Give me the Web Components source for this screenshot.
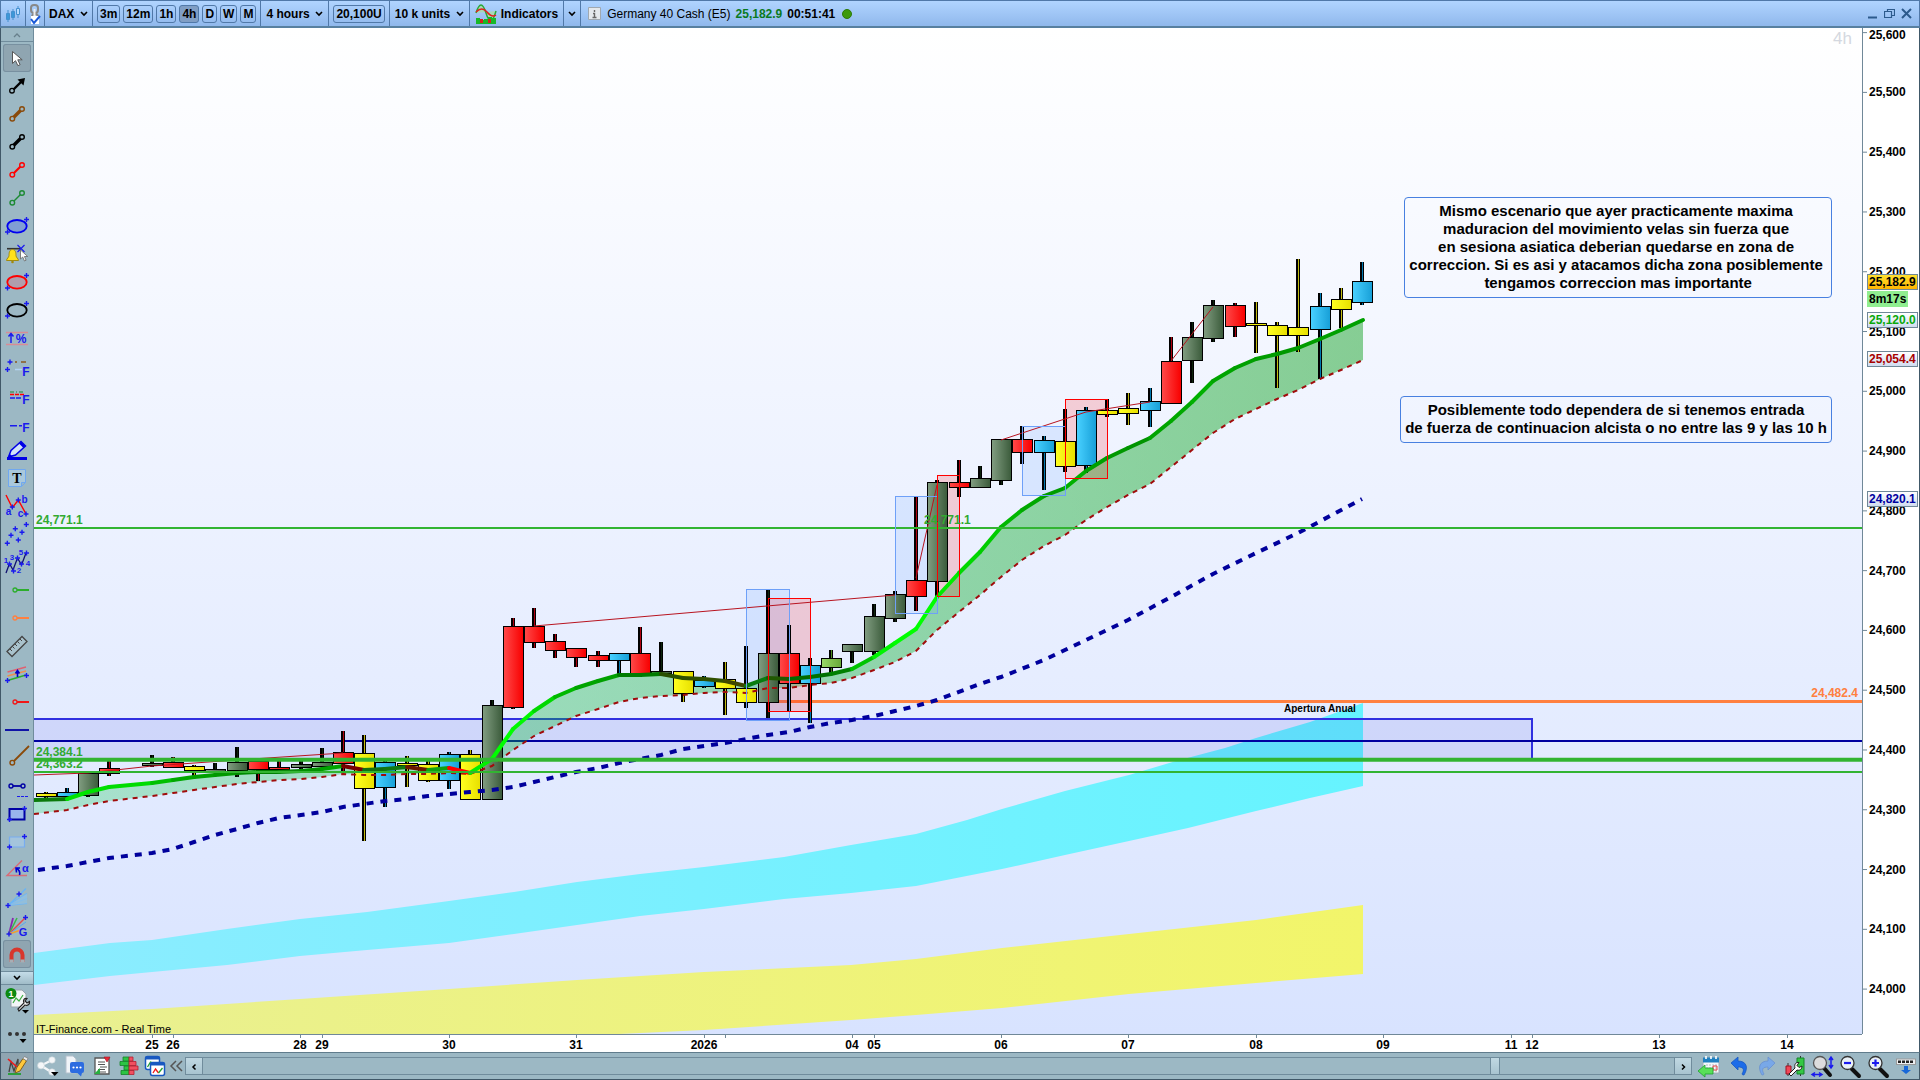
<!DOCTYPE html>
<html lang="en">
<head>
<meta charset="utf-8">
<title>DAX 4 hours</title>
<style>
  html, body {
    margin: 0;
    height: 100%;
    overflow: hidden;
    font: bold 12px "Liberation Sans", Arial, sans-serif;
    color: #000;
  }
</style>
</head>
<body>
<trading-window></trading-window>

<script>
// ---------- icons, all on a 28 x 28 grid ----------

const plus = (x, y, c = '#1a1aee') =>
    `<path d="M${x - 2.5} ${y}h5M${x} ${y - 2.5}v5" stroke="${c}" stroke-width="1.4"/>`;

const link = (color, width) => `
  <path d="M10.5 17.5 18 10" stroke="${color}" stroke-width="${width}"/>
  <g fill="#9cb8c4" stroke="${color}" stroke-width="1.4"><circle cx="9.3" cy="18.7" r="2.3"/><circle cx="19" cy="9" r="2.3"/></g>`;

const oval = (color, fill) => `
  <ellipse cx="14" cy="14.3" rx="9.7" ry="6.3" fill="${fill}" stroke="${color}" stroke-width="1.8"/>
  ${plus(23.5, 7.5)}${plus(4.5, 20)}`;

const ray = (color) => `
  <path d="M14 14h12" stroke="${color}" stroke-width="2"/>
  <circle cx="12" cy="14" r="2" fill="none" stroke="${color}" stroke-width="1.3"/>`;

const letter = (x, y, t, size = 10, color = '#1a1aee') =>
    `<text x="${x}" y="${y}" font-size="${size}" fill="${color}" text-anchor="middle">${t}</text>`;

const lens = (inner) => `
  <path d="m17 17 7 7" stroke="#111" stroke-width="4" stroke-linecap="round"/>
  <circle cx="12.5" cy="11" r="6.5" fill="#e8f0f6" stroke="#333" stroke-width="1.3"/>${inner}`;

const ICONS = {
    cursor: '<path d="M9.5 7.5v12l3-2.8 2.4 5 2.2-1-2.3-4.9h4.4z" fill="#fff" stroke="#555"/>',
    arrow: '<path d="m10.5 17.5 8-8" stroke="#000" stroke-width="2.4"/><path d="m22 6-7.5 1.5 6 6z"/><circle cx="9" cy="18.7" r="2.3" fill="none" stroke="#000" stroke-width="1.3"/>',
    linkBrown: link('#8a4a0a', 3.4),
    linkBlack: link('#000', 3.4),
    linkRed: link('#f00', 2.2),
    linkGreen: link('#1c8a34', 1.4),
    ovalBlue: oval('#0000f0', '#809ed4'),
    bell: `<path d="M4 8.7h14" stroke="#333" stroke-width="1.6"/><path d="m14.5 5 7 7M21.5 5l-7 7" stroke="#1a1aee" stroke-width="1.2"/>
      <path d="M9.5 9.5c-3 0-3.5 3-3.5 6 0 2-2.5 3-2.5 5h12c0-2-2.5-3-2.5-5 0-3-.5-6-3.5-6z" fill="#ffe21a" stroke="#a08a10"/><circle cx="9.5" cy="22" r="1.3" fill="#a08a10"/>
      <path d="M17.5 10v9l2.2-2 1.8 4 1.6-.8-1.7-3.7h3.3z" fill="#fff" stroke="#666" stroke-width=".8"/>`,
    ovalRed: oval('#f00', '#b09eac'),
    ovalBlack: oval('#000', 'none'),
    percent: '<path d="M3 8.5h22M3 20.5h22" stroke="#d88c96" stroke-width="1.6"/><path d="M8 19V10M5.5 12.5 8 9.5l2.5 3" fill="none" stroke="#1a1aee" stroke-width="1.5"/>' + letter(18, 19, '%', 12),
    fibA: plus(7, 10) + plus(4.5, 17.5) + '<path d="M12 10h2M18 10h5" stroke="#8a5a20" stroke-width="1.5"/><path d="M12 17.5h7" stroke="#b4d4f4" stroke-width="1.5"/>' + letter(23, 24, 'F', 12),
    fibB: '<path d="M7 12h15" stroke="#1c8a34" stroke-dasharray="4 2 1 2"/><path d="M7 14.5h15" stroke="#f00" stroke-width="1.5" stroke-dasharray="4 1"/><path d="M7 18h11" stroke="#1a1aee" stroke-width="1.5" stroke-dasharray="5 1"/>' + letter(23, 24, 'F', 12),
    fibC: '<path d="M7 17.7h12" stroke="#1a1aee" stroke-width="1.5" stroke-dasharray="7 2 3 1"/>' + letter(23, 24, 'F', 12),
    marker: '<path d="M4 22.5h20" stroke="#0000e6" stroke-width="3"/><path d="M5.5 21 8 14.5 18 5.5l4.5 4.5-10 9z" fill="#d4e4f8" stroke="#0000e6" stroke-width="1.5"/><path d="m16 7.5 2-2 4.5 4.5-2 2zM5 22l1.500-4.500 3 3z" fill="#0000e6"/>',
    text: '<path d="M5.5 5.5h17v13l-4 4h-13zM22.5 18.5h-4v4" fill="#a9c8dc" stroke="#70a8f0"/><text x="14" y="19" text-anchor="middle" font-family="Liberation Serif,serif" font-size="14">T</text>',
    abc: '<path d="m3 3 6.3 12.7L15.3 8 23 22" fill="none" stroke="#f00" stroke-width="1.4"/>' + plus(9.3, 15) + plus(15.3, 8) + plus(23, 22) + letter(5.5, 23, 'a', 10) + letter(21.5, 11, 'b', 10) + letter(17.5, 25, 'c', 10),
    waveA: '<path d="m4.3 23 3.7-8 7 5 4-8 4-7.5M8 15l4.3-6.3L15.3 20" fill="none" stroke="#82b4ec"/>' + plus(23.3, 4.5) + plus(12.3, 8.7) + plus(19, 12.3) + plus(8, 15.3) + plus(15.3, 20) + plus(4.3, 23.3),
    waveB: '<path d="m3 25 3.5-9.5L10 22l4.5-12 4 7 4.5-12" fill="none" stroke="#101070" stroke-width="1.3"/>' + plus(6.5, 16) + plus(10.5, 23) + plus(14.5, 10) + plus(18.5, 16) + plus(23.5, 5) + letter(3, 15, '1', 8) + letter(16, 25, '2', 8) + letter(9, 12, '3', 8) + letter(25, 18, '4', 8) + letter(18, 7, '5', 8),
    rayGreen: ray('#2cae2c'),
    rayOrange: ray('#ff8040'),
    ruler: '<path d="m4 19.5 15-15 5 5-15 15z" fill="#a9c2cc" stroke="#444" stroke-width="1.3"/><path d="m7 17 2 2m.5-4.5 2 2m.5-4.500 2 2m.5-4.500 2 2M17 7l2 2" stroke="#444"/>',
    channel: '<path d="M4.5 12 23 7" stroke="#e06070" stroke-width="1.4"/><path d="m4.500 16 18.500-5" stroke="#f0904c" stroke-width="1.4"/><path d="M4.5 20.5 23 15" stroke="#2cae2c" stroke-width="1.6"/><path d="M14.5 17v-6m-2 2.5 2-3 2 3" fill="none" stroke="#0000c8" stroke-width="1.6"/>' + plus(4.5, 20.5) + plus(23.5, 15.5),
    rayRed: ray('#f01818'),
    hline: '<path d="M2 14h24" stroke="#0000a4" stroke-width="1.8"/>',
    lineBrown: '<path d="M11 17 26 2" stroke="#8a4a0a" stroke-width="1.8"/><circle cx="9.3" cy="18.7" r="2.3" fill="none" stroke="#8a4a0a" stroke-width="1.4"/>',
    segment: '<path d="M10 14h8" stroke="#0000a4" stroke-width="1.8"/><circle cx="8" cy="14" r="2" fill="none" stroke="#0000a4" stroke-width="1.4"/><circle cx="20" cy="14" r="2" fill="none" stroke="#0000a4" stroke-width="1.4"/><path d="M14 24.5h11" stroke="#1a1aee" stroke-dasharray="3 1"/>',
    rectNavy: '<path d="M6.5 9h15v10.5h-15z" fill="#98b4ec" stroke="#0000a4" stroke-width="2"/>' + plus(21.5, 8.5) + plus(6.5, 19.5),
    rectLight: '<path d="M6.5 9h15v10h-15z" fill="#a4c4dc" stroke="#78acf0" stroke-width="1.2"/>' + plus(21.5, 8.5) + plus(6.5, 19),
    angle: '<path d="m19 4.5-15 15h20" fill="none" stroke="#d86c78" stroke-width="1.4"/><path d="M16.5 19c1-3-1-5.5-3.5-7m.5 4.500-.5-4.500 4 0" fill="none" stroke="#0000d0" stroke-width="1.6"/>' + letter(22.5, 16, 'α', 11),
    fan: '<path d="M5 21.5 23 4.5M5 21.5 24 9.5M5 21.5l19-7M5 21.5l19-2" stroke="#68b4f8" stroke-width="1.2"/><path d="m5 21.5 19-12v10z" fill="#90c0e4" opacity=".7"/>' + plus(16, 10) + plus(5, 21.5),
    gann: '<path d="m6 22 4-16" stroke="#8828b0" stroke-width="1.8"/><path d="m6 22 8-16" stroke="#38b848" stroke-width="1.5"/><path d="M6 22 22 6" stroke="#e84848" stroke-width="1.5"/><path d="m6 22 17-12" stroke="#58a8f0"/><path d="m6 22 12-4" stroke="#f0a030" stroke-width="1.5"/>' + plus(22.5, 5.5) + plus(6, 22) + letter(20, 24, 'G', 11),
    magnet: '<path d="M8.5 22v-7a5.5 5.5 0 0 1 11 0v7" fill="none" stroke="#d8362c" stroke-width="4"/><path d="M6.5 19.5h4v3h-4zM17.5 19.5h4v3h-4z" fill="#a8aeb4"/>',
    docTool: `<path d="M8 5h11l4 4v13H8z" fill="#f4f6f8" stroke="#98a4ac"/><path d="m10 18 3-5 3 3 4-6" fill="none" stroke="#3cb040" stroke-width="1.2"/>
      <path d="m15 24 6-6c-1.5-3 .5-5 3-4.5l-2 2.500 2 2 2.500-1.500c.5 3-2 4.500-4.500 3.500l-6 6z" fill="#fff" stroke="#222" stroke-width="1.2"/>
      <circle cx="8" cy="8.5" r="5.5" fill="#0c8a10"/>${letter(8, 12, '1', 9, '#fff')}<path d="M19 25h7l-3.5 3.5z"/>`,
    dots: '<g fill="#333"><circle cx="7" cy="11" r="2"/><circle cx="14" cy="11" r="2"/><circle cx="21" cy="11" r="2"/></g><path d="M16.5 16h7L20 20z"/>',
    pencil: '<path d="M5 22h13" stroke="#20a030" stroke-width="1.8"/><path d="m6 20 2-10 3 9 4-12v12" fill="none" stroke="#444" stroke-width="1.3"/><path d="m5 7 9 8" stroke="#f01818" stroke-width="1.6"/><path d="m12 21 1.500-5L20 6.500l3.500 2.300L17 19z" fill="#ffc83c" stroke="#806020"/><path d="m20 6.500 1.500-2 3.500 2-1.500 2.300z" fill="#f0f0f0" stroke="#777" stroke-width=".7"/>',
    share: '<path d="M19 7.5 7 13.5 18 20.5" fill="none" stroke="#f4f6f8" stroke-width="2.2"/><g fill="#f4f6f8" stroke="#c0ccd4" stroke-width=".6"><circle cx="18" cy="8" r="3.3"/><circle cx="7" cy="13.5" r="3.5"/><circle cx="18" cy="20" r="3.3"/></g><path d="M17 20h7.500l-3.750 4z"/>',
    chat: '<path d="M5 4h7l3 3v14H5z" fill="#f0f4f8" stroke="#b4c0cc"/><path d="M11 10h10q2 0 2 2v7q0 2-2 2l-1 3.500-3.500-3.500H11q-2 0-2-2v-7q0-2 2-2z" fill="#2c6ce0"/><g fill="#fff"><circle cx="12.500" cy="15.5" r="1.100"/><circle cx="16" cy="15.5" r="1.100"/><circle cx="19.500" cy="15.5" r="1.100"/></g>',
    report: '<path d="M7 6h14v16H7z" fill="#fff" stroke="#555" stroke-width="1.3"/><path d="M10 10h7M10 12.5h7M12 15h7M10 17.5h7M11 20h7" stroke="#555"/><path d="M16 5h6l-3 5z" fill="#e82838" stroke="#a01020" stroke-width=".6"/><path d="m6 22 6-6v6z" fill="#28b040"/>',
    blocks: '<g fill="#2cc444" stroke="#148428" stroke-width=".8"><path d="M8 5h6v4H8zM5 9.5h9v4H5zM9 14h5v4H9zM6 18.5h8v4H6z"/></g><g fill="#f05060" stroke="#b02030" stroke-width=".8"><path d="M14 5h4v4h-4zM14 9.5h7v4h-7zM14 14h9v4h-9zM14 18.5h5v4h-5z"/></g>',
    windows: '<g fill="#fff" stroke="#1858c0" stroke-width="1.5"><rect x="3.5" y="4.500" width="14" height="13" rx="2"/><path d="M3.5 6h14" stroke-width="3"/></g><path d="m5.500 15 3-5 3 1" fill="none" stroke="#20a030" stroke-width="1.3"/><g fill="#fff" stroke="#1858c0" stroke-width="1.5"><rect x="8.5" y="10.5" width="14" height="13" rx="2"/><path d="M8.5 12h14" stroke-width="3"/></g><path d="m11 21 2.500-4 3 4" fill="none" stroke="#f01818" stroke-width="1.3"/><path d="m16.500 21 4-5" stroke="#20a030" stroke-width="1.3"/>',
    collapse: '<path d="m13 9-5 5 5 5M19 9l-5 5 5 5" fill="none" stroke="#555" stroke-width="1.5"/>',
    calendar: '<path d="M8 6h16v15H8z" fill="#f6f8fa" stroke="#a0acb8"/><path d="M8 5.500h16v5H8z" fill="#2080c0"/><path d="M11 4v3M16 4v3M21 4v3" stroke="#fff" stroke-width="1.6"/><path d="M11 13h12M11 16h12M11 19h12" stroke="#b0bcc8" stroke-dasharray="2 1"/><path d="M18 14h4v4h-4z" fill="none" stroke="#e04040"/><path d="m3 19 7-6v3h8v6h-8v3z" fill="#58e058" stroke="#20a030" stroke-width=".8"/>',
    undo: '<path d="m8 11 7-6v4c8 0 11 6 6 14-1 0-2-.5-2-1 3-5 1-7-4-7v3z" fill="#1c6ce8" stroke="#1858c0" stroke-width=".8"/>',
    redo: '<path d="m24 11-7-6v4c-8 0-11 6-6 14 1 0 2-.5 2-1-3-5-1-7 4-7v3z" fill="#78a8e8" stroke="#6890d0" stroke-width=".8"/>',
    candleTool: '<path d="M21.5 4v20M9 11v13" stroke="#333"/><path d="M18 6h7v16h-7z" fill="#34c844" stroke="#148428"/><path d="M7 14h5v8H7z" fill="#f04858" stroke="#a01020"/><path d="m10 22 6-6c-1-4 1-6 4-5.500l-2 3 2 2 3-1.500c0 3-2 5-5 4l-6 6z" fill="#fff" stroke="#222"/>',
    zoomFit: '<path d="m17 16 6 7" stroke="#111" stroke-width="4" stroke-linecap="round"/><circle cx="13" cy="11" r="6.5" fill="#dcdcdc" stroke="#555" stroke-width="1.3"/><path d="M24 6v9M22 8l2-3 2 3M22 13l2 3 2-3M6 22.5h8M8 20.5l-3 2 3 2M12 20.5l3 2-3 2" fill="none" stroke="#1a1aee" stroke-width="1.5"/>',
    zoomOut: lens('<path d="M9 11h7" stroke="#1a1aee" stroke-width="2.2"/>'),
    zoomIn: lens('<path d="M9 11h7M12.5 7.5v7" stroke="#1a1aee" stroke-width="2.2"/>'),
    keys: '<rect x="5.5" y="7" width="19" height="5.5" fill="#eef0f2" stroke="#999"/><path d="M7 9.700h16" stroke="#222" stroke-width="2.500" stroke-dasharray="3 1"/><path d="M13 14h4v4h3l-5 4-5-4h3z" fill="#1868d8"/>'
};

// ---------- small parts ----------

class ToolButton extends HTMLElement {
    connectedCallback() {
        const name = this.getAttribute('icon');
        this.attachShadow({ mode: 'open' }).innerHTML = `
          <style>
            :host { display: block; width: 28px; height: 28px; }
            button {
              display: block;
              box-sizing: border-box;
              width: 100%;
              height: 100%;
              padding: 0;
              border: 0;
              background: none;
              font: inherit;
            }
            svg { display: block; width: 28px; height: 28px; overflow: visible; }
            :host([active]) button { background: #8fa5b1; box-shadow: inset 0 0 0 1px #7890a0; border-radius: 3px; }
          </style>
          <button type="button" aria-label="${name}"><svg viewBox="0 0 28 28">${ICONS[name]}</svg></button>`;
    }
}
customElements.define('tool-button', ToolButton);

class PickList extends HTMLElement {
    connectedCallback() {
        this.attachShadow({ mode: 'open' }).innerHTML = `
          <style>
            :host { display: flex; align-items: center; }
            label { display: flex; align-items: center; gap: 5px; }
            select {
              appearance: none;
              border: 0;
              padding: 0;
              margin: 0;
              background: none;
              font: inherit;
              color: inherit;
            }
            svg { display: block; width: 8px; height: 6px; }
          </style>
          <label>
            <select aria-label="${this.getAttribute('label')}"><option>${this.getAttribute('value')}</option></select>
            <svg viewBox="0 0 8 6"><path d="m1 1 3 3 3-3" fill="none" stroke="#000" stroke-width="1.6"/></svg>
          </label>`;
    }
}
customElements.define('pick-list', PickList);

class TimeButton extends HTMLElement {
    connectedCallback() {
        this.attachShadow({ mode: 'open' }).innerHTML = `
          <style>
            :host { display: block; }
            button {
              display: block;
              height: 18px;
              padding: 0 2px;
              border: 1px solid #5078a8;
              border-radius: 3px;
              background: none;
              font: inherit;
              line-height: 16px;
              color: #000;
            }
            :host([active]) button { background: #809ec4; }
          </style>
          <button type="button"><slot></slot></button>`;
    }
}
customElements.define('time-button', TimeButton);

// ---------- top bar ----------

class TitleBar extends HTMLElement {
    connectedCallback() {
        this.attachShadow({ mode: 'open' }).innerHTML = `
          <style>
            :host {
              display: flex;
              box-sizing: border-box;
              height: 28px;
              border: 1px solid #5078a8;
              border-bottom: 2px solid #5880a0;
              background: linear-gradient(#b0d4ff, #90b8ec);
            }
            .cell {
              display: flex;
              align-items: center;
              gap: 3px;
              padding: 0 4px;
              border-right: 1px solid #5078a8;
            }
            .tight { padding: 0 2px; }
            .wide { padding: 0 5px; }
            .info { gap: 5px; border: 0; padding: 0 7px; font-weight: normal; }
            .info b.up { color: #0a7a1e; }
            .dot { width: 8px; height: 8px; border-radius: 50%; background: #3c9a0c; border: 1px solid #2c7a08; margin-left: 2px; }
            svg { display: block; }
            button { border: 0; padding: 0; background: none; font: inherit; display: flex; align-items: center; gap: 4px; color: #000; }
            .controls { display: flex; align-items: center; gap: 6px; margin-left: auto; padding-right: 7px; }
          </style>
          <div class="cell">
            <svg width="16" height="18"><g stroke="#4490d0" fill="#3c98d8"><path d="M3 5v12M8 4v11"/><path d="M1.5 8.5h3v6h-3zM6.5 6.5h3v6h-3z"/><path d="M13 1v12"/><path d="M11.5 3.5h3v6h-3z" fill="#b8dcff"/></g></svg>
          </div>
          <div class="cell tight">
            <svg width="14" height="22"><g fill="none" stroke="#888" stroke-width="2"><rect x="3" y="2" width="7" height="8" rx="3"/><rect x="4" y="11" width="6" height="7" rx="3"/></g><path d="M6.5 6v8" stroke="#eee" stroke-width="2"/><path d="M3 13h8v8H3z" fill="#fff"/><path d="m3 16 3 4 6-7" fill="none" stroke="#1858d8" stroke-width="2"/></svg>
          </div>
          <div class="cell"><pick-list label="Instrument" value="DAX"></pick-list></div>
          <div class="cell">
            <time-button>3m</time-button>
            <time-button>12m</time-button>
            <time-button>1h</time-button>
            <time-button active>4h</time-button>
            <time-button>D</time-button>
            <time-button>W</time-button>
            <time-button>M</time-button>
          </div>
          <div class="cell wide"><pick-list label="Timeframe" value="4 hours"></pick-list></div>
          <div class="cell"><time-button>20,100U</time-button></div>
          <div class="cell wide"><pick-list label="History" value="10 k units"></pick-list></div>
          <div class="cell wide">
            <button type="button">
              <svg width="22" height="22"><path d="M1 10q5-16 10 0t10-2" fill="#a8d8b8" stroke="#28a838" stroke-width="1.5"/><path d="M1 9q6-6 11 0t9 3" fill="none" stroke="#e02020" stroke-width="1.5"/><path d="M1 21v-6h4v2h4v-1h4v-2h4v1h4v6z" fill="#18b828"/><path d="M5 16h3v4H5zM13 16h3v4h-3z" fill="#d82020"/></svg>
              Indicators
            </button>
          </div>
          <div class="cell">
            <button type="button" aria-label="More indicators"><svg width="8" height="6"><path d="m1 1 3 3 3-3" fill="none" stroke="#000" stroke-width="1.6"/></svg></button>
          </div>
          <div class="cell info">
            <svg width="14" height="14"><path d="M.5.5h12v12H.5z" fill="#e4e8ec" stroke="#a0a8b0"/><path d="M6.5 3v2M5 6.5h1.5v4M4.5 10.5h4" fill="none" stroke="#666" stroke-width="1.4"/></svg>
            <span>Germany 40 Cash (E5)</span><b class="up">25,182.9</b><b>00:51:41</b><i class="dot"></i>
          </div>
          <div class="controls">
            <button type="button" aria-label="Minimise"><svg width="11" height="11"><path d="M1 9.5h9" stroke="#2c5a8c" stroke-width="2"/></svg></button>
            <button type="button" aria-label="Restore"><svg width="11" height="11"><path d="M3.5 3V1.5h7v6H8M.5 3.5h7v6h-7z" fill="none" stroke="#2c5a8c" stroke-width="1.2"/></svg></button>
            <button type="button" aria-label="Close"><svg width="11" height="11"><path d="m1 1 9 9m0-9-9 9" stroke="#2c5a8c" stroke-width="2"/></svg></button>
          </div>`;
    }
}
customElements.define('title-bar', TitleBar);

// ---------- drawing tools ----------

class DrawTools extends HTMLElement {
    connectedCallback() {
        const names = ['cursor', 'arrow', 'linkBrown', 'linkBlack', 'linkRed', 'linkGreen', 'ovalBlue', 'bell',
            'ovalRed', 'ovalBlack', 'percent', 'fibA', 'fibB', 'fibC', 'marker', 'text', 'abc', 'waveA', 'waveB',
            'rayGreen', 'rayOrange', 'ruler', 'channel', 'rayRed', 'hline', 'lineBrown', 'segment', 'rectNavy',
            'rectLight', 'angle', 'fan', 'gann', 'magnet'];
        const active = ['cursor', 'magnet'];
        this.attachShadow({ mode: 'open' }).innerHTML = `
          <style>
            :host {
              display: flex;
              flex-direction: column;
              align-items: center;
              box-sizing: border-box;
              width: 34px;
              border-left: 1px solid #405868;
              border-right: 1px solid #708c9c;
              background: #9cb8c4;
              overflow: hidden;
            }
            .fold {
              flex: none;
              display: flex;
              align-items: center;
              justify-content: center;
              width: 100%;
              height: 14px;
              padding: 0;
              border: 0;
              border-bottom: 1px solid #708c9c;
              background: none;
            }
            .down { border-top: 1px solid #708c9c; background: linear-gradient(#c4dce8, #a0bcc8); }
            .list { padding: 2px 0 3px; }
            .more { display: flex; flex-direction: column; gap: 10px; }
          </style>
          <button class="fold" type="button" aria-label="Scroll up"><svg width="8" height="6"><path d="m1 5 3-3 3 3" fill="none" stroke="#68808c" stroke-width="1.3"/></svg></button>
          <div class="list">${names.map(n => `<tool-button icon="${n}" ${active.includes(n) ? 'active' : ''}></tool-button>`).join('')}</div>
          <button class="fold down" type="button" aria-label="Scroll down"><svg width="8" height="6"><path d="m1 1 3 3 3-3" fill="none" stroke="#000" stroke-width="1.6"/></svg></button>
          <div class="more"><tool-button icon="docTool"></tool-button><tool-button icon="dots"></tool-button></div>`;
    }
}
customElements.define('draw-tools', DrawTools);

// ---------- chart ----------

// drawing space of the plot
const LEFT = 34, TOP = 28, WIDTH = 1828, HEIGHT = 1006;

const priceY = p => 391.3 + (25000 - p) * 0.5978;
const pctY = p => ((priceY(p) - TOP) / HEIGHT * 100).toFixed(3) + '%';
const pctX = x => ((x - LEFT) / WIDTH * 100).toFixed(3) + '%';

// x, high, body top, body bottom, low, colour
const CANDLES = [
    [46, 792, 793, 797, 798, 'y'], [67, 788, 792, 797, 797, 'b'], [88, 773, 773, 796, 797, 'd'],
    [109, 761, 768, 774, 776, 'r'], [152, 755, 763, 766, 767, 'd'], [173, 757, 762, 768, 768, 'r'],
    [194, 765, 766, 771, 776, 'y'], [215, 763, 769, 771, 773, 'd'], [237, 747, 762, 771, 777, 'd'],
    [258, 761, 761, 770, 781, 'r'], [279, 761, 767, 770, 771, 'r'], [301, 761, 764, 768, 769, 'd'],
    [322, 748, 762, 767, 767, 'd'], [343, 731, 752, 764, 772, 'r'], [364, 735, 753, 789, 841, 'y'],
    [385, 761, 762, 788, 807, 'b'], [407, 756, 763, 766, 787, 'y'], [428, 761, 764, 781, 782, 'y'],
    [449, 752, 754, 781, 789, 'b'], [470, 750, 754, 800, 800, 'y'], [492, 700, 705, 800, 800, 'd'],
    [513, 618, 626, 708, 709, 'r'], [534, 608, 626, 643, 648, 'r'], [555, 634, 641, 651, 658, 'r'],
    [576, 648, 648, 658, 667, 'r'], [598, 651, 655, 661, 667, 'r'], [619, 653, 653, 661, 676, 'b'],
    [640, 627, 653, 675, 677, 'r'], [661, 642, 671, 674, 674, 'd'], [683, 671, 671, 694, 702, 'y'],
    [704, 676, 680, 687, 688, 'b'], [725, 662, 679, 689, 715, 'y'], [746, 646, 688, 703, 708, 'y', 'd'],
    [768, 590, 653, 703, 718, 'd'], [789, 625, 653, 684, 711, 'r', 'd'], [810, 658, 665, 684, 723, 'b'],
    [831, 650, 658, 668, 675, 'g'], [852, 644, 644, 652, 663, 'd'], [874, 604, 616, 652, 655, 'd'],
    [895, 591, 594, 619, 622, 'd'], [916, 497, 580, 597, 611, 'r'], [937, 480, 482, 582, 596, 'd'],
    [959, 460, 482, 488, 497, 'r'], [980, 466, 478, 488, 488, 'd'], [1001, 439, 439, 481, 485, 'd'],
    [1022, 426, 439, 453, 464, 'r'], [1044, 436, 440, 453, 490, 'b'], [1065, 409, 441, 467, 472, 'y', 'd'],
    [1086, 407, 410, 466, 473, 'b'], [1107, 399, 410, 415, 417, 'y'], [1128, 393, 408, 414, 425, 'y'],
    [1150, 388, 401, 411, 427, 'b'], [1171, 337, 361, 404, 404, 'r'], [1192, 322, 337, 361, 383, 'd'],
    [1213, 300, 305, 339, 342, 'd'], [1235, 303, 305, 327, 337, 'r'], [1256, 302, 323, 326, 353, 'y'],
    [1277, 322, 325, 336, 388, 'y'], [1298, 259, 327, 336, 352, 'y'], [1320, 293, 306, 330, 379, 'b'],
    [1341, 288, 299, 310, 328, 'y'], [1362, 262, 281, 303, 305, 'b']
];

const COLORS = {
    r: ['#ff4848', '#f80000', '#b00010'],
    y: ['#ffff20', '#e8e000', '#c4bc10'],
    b: ['#48d0ff', '#18a0d8', '#0078b0'],
    d: ['#809c80', '#3c5c3c', '#0c240c'],
    g: ['#98d868', '#68a838', '#4c8c20']
};

// x, fast average, lower average, colour of the segment that ends here
const AVERAGES = [
    [34, 800, 814, ''], [67, 799, 810, '#0a7a0a'], [88, 792, 805, '#00e400'], [109, 787, 801, '#00e000'],
    [152, 783, 796, '#00dc00'], [173, 780, 793, '#00c000'], [194, 777, 790, '#00a800'], [215, 775, 787, '#00a000'],
    [237, 773, 784, '#009800'], [258, 772, 782, '#008c00'], [279, 772, 780, '#008000'], [301, 771, 779, '#0a8a0a'],
    [322, 769, 777, '#009000'], [343, 766, 774, '#00a400'], [364, 770, 775, '#780000'], [385, 769, 775, '#107010'],
    [407, 767, 774, '#107810'], [428, 770, 774, '#6a1800'], [449, 768, 773, '#10a010'], [470, 773, 774, '#ff0000'],
    [492, 759, 766, '#00f000'], [513, 729, 750, '#00ff00'], [534, 711, 736, '#00f800'], [555, 697, 726, '#00d800'],
    [576, 688, 716, '#00b800'], [598, 681, 709, '#00a400'], [619, 675, 702, '#00a000'], [640, 675, 698, '#007c00'],
    [661, 674, 696, '#007c00'], [683, 678, 695, '#285000'], [704, 679, 693, '#305000'], [725, 681, 692, '#305000'],
    [746, 686, 693, '#404800'], [768, 678, 688, '#087c10'], [789, 679, 688, '#205800'], [810, 677, 685, '#006c00'],
    [831, 674, 683, '#007000'], [852, 669, 678, '#008000'], [874, 657, 670, '#00c400'], [895, 643, 662, '#00f400'],
    [916, 629, 651, '#00ff00'], [937, 597, 630, '#00ff00'], [959, 573, 612, '#00ec00'], [980, 552, 595, '#00d800'],
    [1001, 527, 577, '#00cc00'], [1022, 510, 560, '#00b800'], [1044, 496, 546, '#00a800'], [1065, 488, 535, '#009c00'],
    [1086, 471, 520, '#00b000'], [1107, 458, 507, '#00a000'], [1128, 448, 495, '#009800'], [1150, 438, 484, '#009400'],
    [1171, 421, 467, '#00a400'], [1192, 402, 450, '#00a800'], [1213, 381, 433, '#00b000'], [1235, 368, 419, '#00a400'],
    [1256, 359, 409, '#00a000'], [1277, 354, 399, '#009c00'], [1298, 348, 390, '#009800'], [1320, 339, 379, '#009c00'],
    [1341, 330, 370, '#00a000'], [1363, 320, 360, '#00a000']
];

const SLOW = '38,870 67,866 88,862 109,858 152,853 173,849 194,842 215,835 237,829 258,823 279,818 301,815 322,812 343,807 364,804 385,801 407,799 428,796 449,794 470,792 492,790 513,787 534,782 555,777 576,772 598,768 619,763 640,759 661,755 683,749 704,746 725,743 746,739 768,735 789,732 810,727 831,723 852,720 874,716 895,711 916,706 937,700 980,684 1001,677 1044,660 1086,640 1128,620 1171,597 1213,574 1256,553 1298,533 1362,499';
const CYAN = '34,953 110,943 152,940 227,929 300,919 367,912 449,901 514,892 577,882 640,874 704,867 784,857 851,845 916,834 967,820 1002,809 1065,791 1129,775 1176,761 1225,748 1256,738 1310,722 1363,703 1363,786 1310,798 1256,811 1188,828 1129,841 1065,855 1002,869 916,886 851,893 784,899 704,909 640,916 577,925 514,934 449,943 367,950 300,956 227,965 152,972 110,976 34,985';
const YELLOW = '34,1015 152,1009 300,999 449,989 577,980 704,972 851,965 916,959 1002,948 1129,934 1256,920 1363,905 1363,974 1256,983 1129,994 1002,1008 916,1015 851,1020 704,1030 577,1036 34,1070';

const ZONES = [
    [746, 589, 43, 131, 'blue'], [768, 598, 42, 113, 'red'],
    [895, 496, 42, 117, 'blue'], [937, 475, 22, 121, 'red'],
    [1022, 426, 43, 69, 'blue'], [1065, 399, 42, 79, 'red']
];

const DAYS = [[152, '25'], [173, '26'], [300, '28'], [322, '29'], [449, '30'], [576, '31'], [704, '2026'], [725, ''],
    [852, '04'], [874, '05'], [1001, '06'], [1128, '07'], [1256, '08'], [1383, '09'], [1511, '11'], [1532, '12'],
    [1659, '13'], [1787, '14']];

class PricePlot extends HTMLElement {
    connectedCallback() {
        this.attachShadow({ mode: 'open' }).innerHTML = `
          <style>
            :host {
              display: block;
              position: relative;
              min-width: 0;
              min-height: 0;
              overflow: hidden;
              background: linear-gradient(#fff, #d8e3ff);
            }
            svg { display: block; width: 100%; height: 100%; position: absolute; }
            .unit, .source { position: absolute; font-weight: normal; }
            .unit { top: 2px; right: 10px; font-size: 17px; line-height: 18px; color: #d4d8e0; }
            .source { left: 2px; bottom: -1px; font-size: 11px; line-height: 12px; }
          </style>
          <svg viewBox="${LEFT} ${TOP} ${WIDTH} ${HEIGHT}" preserveAspectRatio="none">
            <defs>
              ${Object.entries(COLORS).map(([k, c]) => `<linearGradient id="${k}"><stop stop-color="${c[0]}"/><stop offset="1" stop-color="${c[1]}"/></linearGradient>`).join('')}
              <linearGradient id="cy"><stop stop-color="#8cecff"/><stop offset="1" stop-color="#66f4ff"/></linearGradient>
              <linearGradient id="ye"><stop stop-color="#e9f092"/><stop offset="1" stop-color="#f2f56a"/></linearGradient>
              <linearGradient id="ar"><stop stop-color="#00c83c" stop-opacity=".25"/><stop offset="1" stop-color="#10a020" stop-opacity=".48"/></linearGradient>
            </defs>
            <polygon points="${YELLOW}" fill="url(#ye)"/>
            <polygon points="${CYAN}" fill="url(#cy)"/>
            <path d="M34 719h1498v41H34z" fill="#2020d0" opacity=".1"/>
            <path d="M34 719h1498v41" fill="none" stroke="#3030e0" stroke-width="2"/>
            <path d="M34 741h1828" stroke="#0000a0" stroke-width="2"/>
            <path d="M768 701.5h1094" stroke="#ff8040" stroke-width="3"/>
            ${this.area()}
            ${this.zones(c => `fill="${c === 'red' ? '#ff0000' : '#64a0ff'}" fill-opacity=".16"`)}
            ${CANDLES.map(c => this.candle(c)).join('')}
            <path d="M34 775 88 773 152 766 237 760 343 753M534 626 895 595M916 578l21-93M1001 440l85-28 64-10M1171 361l42-54" fill="none" stroke="#b81420"/>
            ${this.averages()}
            <polyline points="${SLOW}" fill="none" stroke="#00009c" stroke-width="4" stroke-dasharray="7 7"/>
            <path d="M34 528h1828M34 772h1828" stroke="#32b432" stroke-width="2"/>
            ${this.zones(c => `fill="none" stroke="${c === 'red' ? '#f00' : '#6ea0f8'}"`)}
          </svg>
          <svg font-size="12">
            <g fill="#32aa32">
              <text x="2" y="${pctY(24778)}">24,771.1</text>
              <text x="${pctX(924)}" y="${pctY(24778)}">24,771.1</text>
              <text x="2" y="${pctY(24390)}">24,384.1</text>
              <text x="2" y="${pctY(24370)}">24,363.2</text>
            </g>
            <line x2="100%" y1="${pctY(24383.5)}" y2="${pctY(24383.5)}" stroke="#32b432" stroke-width="4"/>
            <text x="${pctX(1858)}" y="${pctY(24489)}" fill="#ff8040" text-anchor="end">24,482.4</text>
            <text x="${pctX(1284)}" y="${pctY(24463)}" font-size="10">Apertura Anual</text>
          </svg>
          <span class="unit">4h</span>
          <span class="source">IT-Finance.com - Real Time</span>
          <slot></slot>`;
    }

    zones(paint) {
        return ZONES.map(([x, y, w, h, c]) =>
            `<rect x="${x + 0.5}" y="${y + 0.5}" width="${w}" height="${h}" ${paint(c)}/>`).join('');
    }

    candle([x, high, top, bottom, low, color, wick]) {
        const w = COLORS[wick || color][2];
        return `<rect x="${x - 2}" y="${high}" width="4" height="${low - high}"/>
          <rect x="${x}" y="${high}" width="1" height="${low - high}" fill="${w}"/>
          <rect x="${x - 10}" y="${top}" width="21" height="${bottom - top}"/>
          <rect x="${x - 9}" y="${top + 1}" width="19" height="${Math.max(bottom - top - 2, 1)}" fill="url(#${color})"/>`;
    }

    area() {
        const upper = AVERAGES.map(a => a[0] + ',' + a[1]);
        const lower = AVERAGES.map(a => a[0] + ',' + a[2]).reverse();
        return `<polygon points="${upper.concat(lower).join(' ')}" fill="url(#ar)"/>`;
    }

    averages() {
        const lines = AVERAGES.slice(1).map((a, i) => {
            const p = AVERAGES[i];
            return `<line x1="${p[0]}" y1="${p[1]}" x2="${a[0]}" y2="${a[1]}" stroke="${a[3]}" stroke-width="4" stroke-linecap="round"/>`;
        });
        const low = AVERAGES.map(a => a[0] + ',' + a[2]).join(' ');
        return `<polyline points="${low}" fill="none" stroke="#a00c0c" stroke-width="2" stroke-dasharray="5 5"/>${lines.join('')}`;
    }
}
customElements.define('price-plot', PricePlot);

class ChartNote extends HTMLElement {
    connectedCallback() {
        this.attachShadow({ mode: 'open' }).innerHTML = `
          <style>
            :host {
              display: block;
              position: absolute;
              right: 30px;
              box-sizing: border-box;
              padding: 4px 4px 5px;
              border: 1px solid #4880e0;
              border-radius: 4px;
              font-size: 15px;
              line-height: 18px;
              text-align: center;
            }
            div { white-space: pre; }
          </style>
          <div><slot></slot></div>`;
    }
}
customElements.define('chart-note', ChartNote);

class PriceAxis extends HTMLElement {
    connectedCallback() {
        const steps = Array.from({ length: 17 }, (_, i) => 25600 - i * 100);
        this.attachShadow({ mode: 'open' }).innerHTML = `
          <style>
            :host { display: block; position: relative; border-left: 1px solid #708898; background: #fff; }
            svg { display: block; position: absolute; width: 100%; height: 100%; overflow: visible; }
          </style>
          <svg font-size="12">
            ${steps.map((p, i) => `<line x2="4" y1="${pctY(p)}" y2="${pctY(p)}" stroke="#708898"/><text x="6" y="${pctY(p)}" dy="${i ? 4 : 6}">${p.toLocaleString('en-US')}</text>`).join('')}
          </svg>
          <slot></slot>`;
    }
}
customElements.define('price-axis', PriceAxis);

class PriceTag extends HTMLElement {
    connectedCallback() {
        this.style.top = pctY(Number(this.getAttribute('price')));
        this.attachShadow({ mode: 'open' }).innerHTML = `
          <style>
            :host {
              display: block;
              position: absolute;
              left: 4px;
              box-sizing: border-box;
              height: 16px;
              margin-top: -8px;
              padding: 0 1px;
              border: 1px solid #708898;
              background: linear-gradient(#fff, #d0dcf0);
              line-height: 14px;
              white-space: nowrap;
            }
            :host([kind="last"]) { background: linear-gradient(#ffe030, #ffb400); }
            :host([kind="timer"]) { background: #90ee90; border-color: #90ee90; }
          </style>
          <slot></slot>`;
    }
}
customElements.define('price-tag', PriceTag);

class TimeAxis extends HTMLElement {
    connectedCallback() {
        this.attachShadow({ mode: 'open' }).innerHTML = `
          <style>
            :host { display: block; height: 18px; border-right: 1px solid #405868; background: #fff; }
            svg { display: block; width: calc(100% - 57px); height: 18px; overflow: visible; }
          </style>
          <svg font-size="12">
            <line x2="100%" y1=".5" y2=".5" stroke="#708898"/>
            ${DAYS.map(([x, t]) => `<line x1="${pctX(x + 0.5)}" x2="${pctX(x + 0.5)}" y1="0" y2="4" stroke="#708898"/><text x="${pctX(x)}" y="15" text-anchor="middle">${t}</text>`).join('')}
          </svg>`;
    }
}
customElements.define('time-axis', TimeAxis);

// ---------- bottom bar ----------

class BottomBar extends HTMLElement {
    connectedCallback() {
        const tools = names => names.map(n => `<tool-button icon="${n}"></tool-button>`).join('');
        this.attachShadow({ mode: 'open' }).innerHTML = `
          <style>
            :host {
              display: flex;
              align-items: center;
              box-sizing: border-box;
              height: 28px;
              border: 1px solid #405868;
              border-top-color: #607c8c;
              background: #9cb8c4;
              overflow: hidden;
            }
            .draw { display: flex; flex: none; justify-content: center; width: 32px; border-right: 1px solid #708c9c; background: #8fa5b1; }
            .group { display: flex; flex: none; }
            .left tool-button { width: 27px; }
            .left tool-button:last-child { width: 18px; margin-left: -6px; }
            .scroll { flex: 1; display: flex; height: 18px; box-sizing: border-box; border: 1px solid #708c9c; margin: 0 3px 0 4px; }
            .scroll button { width: 17px; padding: 0; border: 0; background: linear-gradient(#c0d8e2, #a8c4d0); }
            .scroll button:first-child { border-right: 1px solid #708c9c; }
            .scroll button:last-child { border-left: 1px solid #708c9c; }
            input { flex: 1; min-width: 0; margin: 0; appearance: none; background: none; }
            input::-webkit-slider-thumb {
              appearance: none;
              width: 10px;
              height: 16px;
              border: 1px solid #708c9c;
              border-width: 0 1px;
              background: linear-gradient(#c0d8e2, #a8c4d0);
            }
          </style>
          <div class="draw"><tool-button icon="pencil"></tool-button></div>
          <div class="group left">${tools(['share', 'chat', 'report', 'blocks', 'windows', 'collapse'])}</div>
          <div class="scroll">
            <button type="button" aria-label="Back"><svg width="8" height="8"><path d="M5.5 1.5 3 4l2.5 2.5" fill="none" stroke="#000" stroke-width="1.5"/></svg></button>
            <input type="range" aria-label="Position in history" min="0" max="1000" value="881">
            <button type="button" aria-label="Forward"><svg width="8" height="8"><path d="M3 1.5 5.5 4 3 6.5" fill="none" stroke="#000" stroke-width="1.5"/></svg></button>
          </div>
          <div class="group">${tools(['calendar', 'undo', 'redo', 'candleTool', 'zoomFit', 'zoomOut', 'zoomIn', 'keys'])}</div>`;
    }
}
customElements.define('bottom-bar', BottomBar);

// ---------- window ----------

class TradingWindow extends HTMLElement {
    connectedCallback() {
        // the notes keep their own line breaks and trailing spaces
        const first = [
            'Mismo escenario que ayer practicamente maxima ',
            'maduracion del movimiento velas sin fuerza que ',
            'en sesiona asiatica deberian quedarse en zona de ',
            'correccion. Si es asi y atacamos dicha zona posiblemente ',
            'tengamos correccion mas importante'
        ].join('\n');
        const second = [
            'Posiblemente todo dependera de si tenemos entrada',
            'de fuerza de continuacion alcista o no entre las 9 y las 10 h'
        ].join('\n');
        this.attachShadow({ mode: 'open' }).innerHTML = `
          <style>
            :host { display: grid; grid-template-rows: auto 1fr auto; height: 100vh; }
            main { display: grid; grid-template-columns: auto 1fr; min-height: 0; }
            .chart { display: grid; grid-template-columns: 1fr 58px; grid-template-rows: 1fr auto; min-width: 0; min-height: 0; }
            time-axis { grid-column: 1 / 3; }
            price-axis { border-right: 1px solid #405868; }
            .first { top: 169px; }
            .second { top: 368px; }
            .ema { color: #0aa80a; }
            .low { color: #a80000; }
            .slow { color: #0000a0; }
          </style>
          <title-bar></title-bar>
          <main>
            <draw-tools></draw-tools>
            <div class="chart">
              <price-plot>
                <chart-note class="first">${first}</chart-note>
                <chart-note class="second">${second}</chart-note>
              </price-plot>
              <price-axis>
                <price-tag price="25182.9" kind="last">25,182.9</price-tag>
                <price-tag price="25155" kind="timer">8m17s</price-tag>
                <price-tag price="25120" class="ema">25,120.0</price-tag>
                <price-tag price="25054.4" class="low">25,054.4</price-tag>
                <price-tag price="24820.1" class="slow">24,820.1</price-tag>
              </price-axis>
              <time-axis></time-axis>
            </div>
          </main>
          <bottom-bar></bottom-bar>`;
    }
}
customElements.define('trading-window', TradingWindow);
</script>
</body>
</html>
